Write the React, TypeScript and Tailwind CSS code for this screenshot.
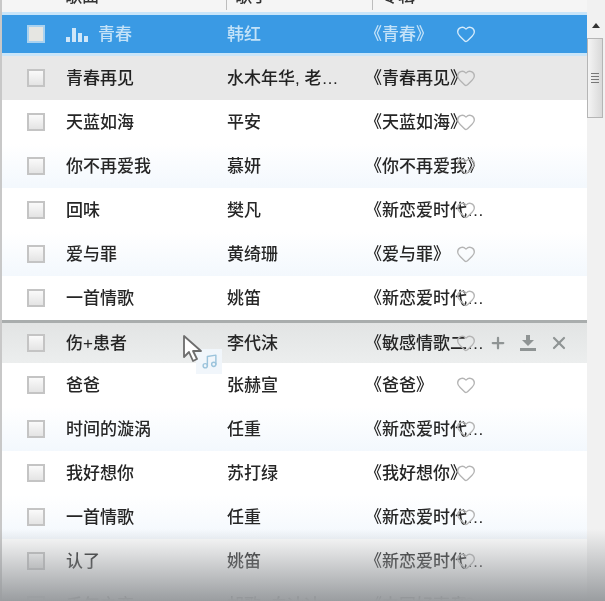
import { Heart, Music, Plus, X } from 'lucide-react';

interface Song {
  title: string;
  artist: string;
  album: string;
}

const songs: Song[] = [
  { title: '青春', artist: '韩红', album: '《青春》' },
  { title: '青春再见', artist: '水木年华, 老狼等', album: '《青春再见》' },
  { title: '天蓝如海', artist: '平安', album: '《天蓝如海》' },
  { title: '你不再爱我', artist: '慕妍', album: '《你不再爱我》' },
  { title: '回味', artist: '樊凡', album: '《新恋爱时代》原声' },
  { title: '爱与罪', artist: '黄绮珊', album: '《爱与罪》' },
  { title: '一首情歌', artist: '姚笛', album: '《新恋爱时代》原声' },
  { title: '伤+患者', artist: '李代沫', album: '《敏感情歌二》原声' },
  { title: '爸爸', artist: '张赫宣', album: '《爸爸》' },
  { title: '时间的漩涡', artist: '任重', album: '《新恋爱时代》原声' },
  { title: '我好想你', artist: '苏打绿', album: '《我好想你》' },
  { title: '一首情歌', artist: '任重', album: '《新恋爱时代》原声' },
  { title: '认了', artist: '姚笛', album: '《新恋爱时代》原声' },
  { title: '千年之恋', artist: '胡歌, 白冰冰', album: '《中国好声音》原声' },
];

function Checkbox({ active }: { active?: boolean }) {
  return (
    <span
      className={
        active
          ? 'h-[18px] w-[18px] shrink-0 border-2 border-[#a9d2f0] bg-[#e6e6e2]'
          : 'h-[18px] w-[18px] shrink-0 border-2 border-[#c4c4c4] bg-gradient-to-b from-[#fafafa] to-[#e4e4e4]'
      }
    />
  );
}

function Bars() {
  return (
    <svg viewBox="0 0 22 14" className="mr-[10px] h-[14px] w-[22px] shrink-0 fill-[#cfe6f8]">
      <rect x="0" y="9" width="4" height="5" />
      <rect x="6" y="0" width="4" height="14" />
      <rect x="12" y="5" width="4" height="9" />
      <rect x="18" y="8" width="4" height="6" />
    </svg>
  );
}

function DownloadIcon() {
  return (
    <svg viewBox="0 0 18 18" className="h-[18px] w-[18px] fill-[#8f9494]">
      <rect x="7" y="1" width="4" height="5" />
      <path d="M3 6h12l-6 6z" />
      <rect x="1" y="14" width="16" height="3" />
    </svg>
  );
}

function Row({ song, index }: { song: Song; index: number }) {
  const selected = index === 0;
  const hovered = index === 7;

  let rowClass = 'bg-white text-[#262626]';
  if (selected) rowClass = 'border-y-[3px] border-[#c9e5f9] bg-[#3a9ae4] text-[#c3e2f8]';
  if (index === 1) rowClass = 'bg-[#e8e8e8] text-[#222]';
  if (index % 2 === 1 && index > 1) rowClass = 'bg-gradient-to-b from-white to-[#f3f8fd] text-[#262626]';
  if (hovered) rowClass = 'border-t-[3px] border-[#a9adad] bg-gradient-to-b from-[#e2e4e4] to-[#eceeee] text-[#262626]';

  return (
    <div className={`relative flex shrink-0 items-center pl-[25px] ${hovered ? 'h-[43px]' : 'h-[44px]'} ${rowClass}`}>
      <Checkbox active={selected} />
      <div className="ml-[21px] flex w-[161px] items-center truncate pt-[2px]">
        {selected && <Bars />}
        {song.title}
      </div>
      <div className="w-[138px] truncate pt-[2px] pr-[25px]">{song.artist}</div>
      <div className="w-[122px] truncate pt-[2px]">{song.album}</div>

      <Heart
        strokeWidth={1.6}
        className={`absolute left-[454px] top-1/2 h-[20px] w-[20px] -translate-y-1/2 ${selected ? 'text-[#d5ebfb]' : 'text-[#b4b4b4]'}`}
      />

      {hovered && (
        <div className="absolute left-[487px] top-1/2 flex -translate-y-1/2 items-center gap-[12px] text-[#8f9494]">
          <Plus strokeWidth={3} className="h-[18px] w-[18px]" />
          <DownloadIcon />
          <X strokeWidth={2.6} className="h-[20px] w-[20px]" />
        </div>
      )}
    </div>
  );
}

function Scrollbar() {
  return (
    <div className="flex w-[18px] shrink-0 flex-col bg-[#f1f1f1]">
      <div className="flex h-[38px] shrink-0 items-end justify-center pb-[10px]">
        <span className="h-0 w-0 border-x-[4px] border-b-[5px] border-x-transparent border-b-[#333]" />
      </div>
      <div className="flex h-[80px] w-[16px] shrink-0 flex-col items-center justify-center gap-[2px] border border-[#b5b5b5] bg-gradient-to-r from-[#f4f4f4] to-[#d9d9d9]">
        <span className="h-px w-[8px] bg-[#777]" />
        <span className="h-px w-[8px] bg-[#777]" />
        <span className="h-px w-[8px] bg-[#777]" />
        <span className="h-px w-[8px] bg-[#777]" />
      </div>
    </div>
  );
}

export default function App() {
  return (
    <div className="relative h-[601px] w-[605px] overflow-hidden bg-white font-['Liberation_Sans','Noto_Sans_CJK_SC',sans-serif] text-[17px] font-medium blur-[0.7px]">
      <div className="flex h-full">
        <div className="flex min-w-0 flex-1 flex-col overflow-hidden border-l-2 border-[#c8c8c8]">
          <div className="flex h-[12px] shrink-0 items-center overflow-hidden bg-[#f5f5f5] pl-[63px] text-[#333]">
            <div className="-mt-[18px] w-[161px]">歌曲</div>
            <div className="-mt-[18px] w-[146px] border-l border-[#bdbdbd] pl-[8px]">歌手</div>
            <div className="-mt-[18px] border-l border-[#bdbdbd] pl-[8px]">专辑</div>
          </div>
          {songs.map((song, i) => (
            <Row key={i} song={song} index={i} />
          ))}
        </div>
        <Scrollbar />
      </div>

      {/* drag cursor with the note ghost */}
      <div className="absolute left-[196px] top-[349px] flex h-[25px] w-[26px] items-center justify-center bg-[#f1f6fb]">
        <Music strokeWidth={2} className="h-[17px] w-[17px] text-[#9cc4dc]" />
      </div>
      <svg viewBox="0 0 22 28" className="absolute left-[183px] top-[335px] h-[28px] w-[22px]">
        <path d="M1 1v21l5-5 4 9 4-2-4-8h8z" fill="#fff" stroke="#6d6d6d" strokeWidth="1.8" strokeLinejoin="round" />
      </svg>

      <div className="absolute inset-x-0 bottom-0 h-[72px] bg-gradient-to-b from-transparent to-[#9a9da0]" />
    </div>
  );
}
